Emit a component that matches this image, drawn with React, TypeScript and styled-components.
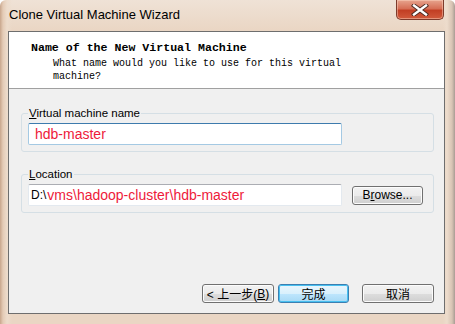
import React, { FC } from "react"
import styled, { createGlobalStyle } from "styled-components"

const GlobalStyle = createGlobalStyle`
    html, body {
        margin: 0;
        padding: 0;
        background: #ffffff;
    }
`

const UI_FONT = `"Liberation Sans", Arial, "Noto Sans CJK SC", sans-serif`
const MONO_FONT = `"Liberation Mono", "Courier New", monospace`

export default function App() {
    return <>
        <GlobalStyle />
        <Window>
            <TitleBar>
                <Title>Clone Virtual Machine Wizard</Title>
                <CloseButton>
                    <svg width="18" height="12" viewBox="0 0 18 12">
                        <path
                            d="M3 1.5 L15 10.5 M15 1.5 L3 10.5"
                            stroke="#4a2a22"
                            strokeWidth="4.2"
                            strokeLinecap="square"
                        />
                        <path
                            d="M3 1.5 L15 10.5 M15 1.5 L3 10.5"
                            stroke="#ffffff"
                            strokeWidth="2.4"
                            strokeLinecap="square"
                        />
                    </svg>
                </CloseButton>
            </TitleBar>
            <Client>
                <Header>
                    <HeaderTitle>Name of the New Virtual Machine</HeaderTitle>
                    <HeaderText>
                        What name would you like to use for this virtual<br />machine?
                    </HeaderText>
                </Header>
                <Body>
                    <GroupBox>
                        <Legend><u>V</u>irtual machine name</Legend>
                        <TextBox $focused>
                            <Marked>hdb-master</Marked>
                        </TextBox>
                    </GroupBox>
                    <GroupBox $gap>
                        <Legend><u>L</u>ocation</Legend>
                        <Row>
                            <TextBox>
                                <Plain>D:\</Plain>
                                <Marked>vms\hadoop-cluster\hdb-master</Marked>
                            </TextBox>
                            <PushButton $width={71}>B<u>r</u>owse...</PushButton>
                        </Row>
                    </GroupBox>
                    <Footer>
                        <PushButton $width={72}>&lt; 上一步(<u>B</u>)</PushButton>
                        <PushButton $width={71} $primary>完成</PushButton>
                        <Spacer />
                        <PushButton $width={72}>取消</PushButton>
                    </Footer>
                </Body>
            </Client>
        </Window>
    </>
}

const Window = styled.div`
    box-sizing: border-box;
    width: 455px;
    height: 324px;
    padding: 0 10px 10px 8px;
    display: flex;
    flex-direction: column;
    border-radius: 6px 6px 0 0;
    background:
        linear-gradient(to right, #c8a68c 0, #e4cbb6 3px, #eddccc 7px, rgba(237, 220, 204, 0) 12px),
        linear-gradient(to left, #a89c94 0, #d8c4b4 3px, #eddccc 8px, rgba(237, 220, 204, 0) 12px),
        linear-gradient(to bottom, #efe2d6 0, #ead6c4 30px, #ead6c4 100%);
    font-family: ${UI_FONT};
`

const TitleBar = styled.div`
    height: 31px;
    display: flex;
    align-items: flex-start;
    justify-content: space-between;
`

const Title = styled.div`
    padding: 6px 0 0 1px;
    font-size: 13px;
    line-height: 18px;
    color: #000000;
`

const CloseButton = styled.div`
    box-sizing: border-box;
    width: 48px;
    height: 20px;
    margin-right: 1px;
    display: flex;
    align-items: center;
    justify-content: center;
    border: 1px solid #7d3b2c;
    border-top: none;
    border-radius: 0 0 5px 5px;
    background: linear-gradient(to bottom, #e7a48e 0%, #d66f56 45%, #c23f24 55%, #d15a3c 100%);
    box-shadow: inset 0 0 0 1px rgba(255, 220, 200, 0.45);
`

const Client = styled.div`
    flex: 1;
    display: flex;
    flex-direction: column;
    border: 1px solid #6e6e6e;
    background: #f0f0f0;
`

const Header = styled.div`
    height: 57px;
    box-sizing: border-box;
    padding: 9px 0 0 22px;
    background: #ffffff;
    border-bottom: 1px solid #a0a0a0;
`

const HeaderTitle = styled.div`
    font-family: ${MONO_FONT};
    font-size: 11.6px;
    font-weight: bold;
    line-height: 14px;
    color: #000000;
`

const HeaderText = styled.div`
    padding: 2px 0 0 22px;
    font-family: ${MONO_FONT};
    font-size: 10px;
    line-height: 13px;
    color: #000000;
`

const Body = styled.div`
    flex: 1;
    display: flex;
    flex-direction: column;
    padding: 17px 10px 10px 12px;
`

const GroupBox = styled.fieldset<{ $gap?: boolean }>`
    margin: ${p => (p.$gap ? "15px" : "0")} 0 0 0;
    min-width: 0;
    padding: 3px 6px 6px 6px;
    border: 1px solid #d5dfe5;
    border-radius: 3px;
`

const Legend = styled.legend`
    padding: 0 1px;
    font-size: 11.5px;
    line-height: 14px;
    color: #000000;
`

const Row = styled.div`
    display: flex;
    align-items: center;
    gap: 10px;
`

const TextBox = styled.div<{ $focused?: boolean }>`
    box-sizing: border-box;
    width: 314px;
    height: 22px;
    padding: 0 0 0 2px;
    display: flex;
    align-items: center;
    background: #ffffff;
    border: 1px solid ${p => (p.$focused ? "#a4c9e3" : "#e3e9ef")};
    border-top-color: ${p => (p.$focused ? "#3d7bad" : "#abadb3")};
    border-radius: 2px;
    white-space: nowrap;
`

const Plain = styled.span`
    font-size: 12px;
    color: #000000;
`

const Marked = styled.span`
    font-size: 14px;
    color: #ee1a3a;
    padding-left: 4px;
    ${Plain} + & {
        padding-left: 1px;
    }
`

const Footer = styled.div`
    margin-top: auto;
    display: flex;
    justify-content: flex-end;
    gap: 4px;
`

const Spacer = styled.div`
    width: 5px;
`

const PushButton = styled.div<{ $width: number, $primary?: boolean }>`
    box-sizing: border-box;
    width: ${p => p.$width}px;
    height: 19px;
    display: flex;
    align-items: center;
    justify-content: center;
    font-family: ${UI_FONT};
    font-size: 12px;
    color: #000000;
    border: 1px solid ${p => (p.$primary ? "#3c7fb1" : "#707070")};
    border-radius: 3px;
    background: ${p => (p.$primary
        ? "linear-gradient(to bottom, #eaf6fd 0%, #d9f0fc 50%, #bee6fd 51%, #a7d9f5 100%)"
        : "linear-gradient(to bottom, #f2f2f2 0%, #ebebeb 50%, #dddddd 51%, #cfcfcf 100%)")};
    box-shadow: inset 0 0 0 1px ${p => (p.$primary ? "#48c0f0" : "#fcfcfc")};
`
